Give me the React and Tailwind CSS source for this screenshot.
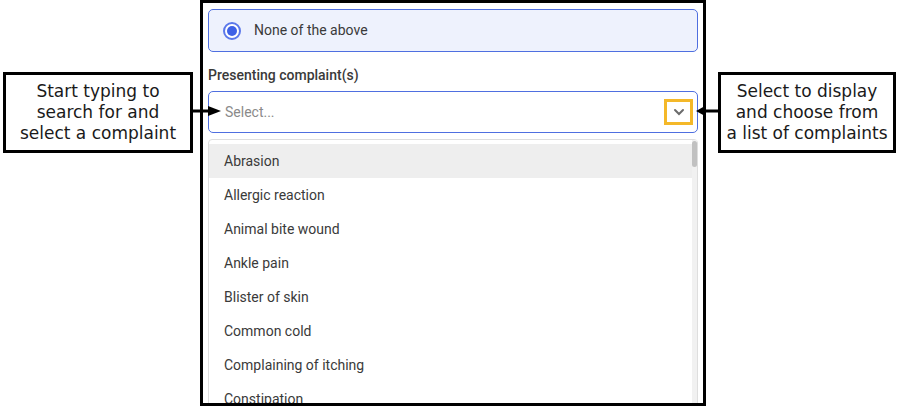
const complaints = [
  "Abrasion",
  "Allergic reaction",
  "Animal bite wound",
  "Ankle pain",
  "Blister of skin",
  "Common cold",
  "Complaining of itching",
  "Constipation",
];

const callout = { fontFamily: '"DejaVu Sans", "Liberation Sans", sans-serif' };
const ui = { fontFamily: 'Roboto, "Liberation Sans", sans-serif' };

function Callout({ className, children }) {
  return (
    <div
      className={`mt-[72px] h-[81px] border-[3px] border-black bg-white flex items-center justify-center text-center text-[17px] leading-[21px] text-[#1a1a1a] ${className}`}
      style={callout}
    >
      <p>{children}</p>
    </div>
  );
}

function Chevron() {
  return (
    <svg width="12" height="8" viewBox="0 0 12 8">
      <path d="M2 2l4 4 4-4" fill="none" stroke="#6b6b6b" strokeWidth="2" strokeLinecap="round" />
    </svg>
  );
}

export default function App() {
  return (
    <div className="relative w-[897px] h-[407px] bg-white flex items-start overflow-hidden">
      <Callout className="ml-[3px] w-[190px]">
        Start typing to
        <br />
        search for and
        <br />
        select a complaint
      </Callout>

      {/* form frame */}
      <div
        className="ml-[7px] w-[506px] h-[406px] border-[3px] border-black bg-white px-[5px] pt-[6px] overflow-hidden"
        style={ui}
      >
        <div className="h-[43px] rounded-[5px] border border-[#4f6fe0] bg-[#eef2fd] flex items-center pl-[14px]">
          <span className="w-[18px] h-[18px] rounded-full border-2 border-[#5b78ea] bg-white flex items-center justify-center">
            <span className="w-[10px] h-[10px] rounded-full bg-[#3f62e6]" />
          </span>
          <span className="ml-[13px] text-[14px] text-[#3a3a3a]">None of the above</span>
        </div>

        <div className="mt-[14px] leading-[18px] text-[14px] font-medium text-[#3a3a3a]">
          Presenting complaint(s)
        </div>

        <div className="mt-[7px] h-[42px] rounded-[5px] border border-[#4f6fe0] bg-white flex items-center pl-[16px] pr-[4px]">
          <span className="flex-1 text-[14px] text-[#8a8a8a]">Select...</span>
          <span className="w-[29px] h-[26px] border-[3px] border-[#f4b829] flex items-center justify-center">
            <Chevron />
          </span>
        </div>

        <div className="mt-[6px] rounded-[4px] border border-[#dedede] bg-white flex">
          <ul className="flex-1 pt-[4px] text-[14px] text-[#3a3a3a]">
            {complaints.map((c, i) => (
              <li
                key={c}
                className={`h-[34px] flex items-center pl-[15px] ${i === 0 ? "bg-[#eeeeee]" : ""}`}
              >
                {c}
              </li>
            ))}
          </ul>
          <div className="w-[5px] bg-[#f1f1f1] pt-[1px]">
            <div className="h-[26px] rounded-full bg-[#c1c1c1]" />
          </div>
        </div>
      </div>

      <Callout className="ml-[12px] w-[178px]">
        Select to display
        <br />
        and choose from
        <br />
        a list of complaints
      </Callout>

      {/* arrows */}
      <svg className="absolute left-[190px] top-[104px]" width="34" height="14" viewBox="0 0 34 14">
        <rect x="0" y="5.5" width="20" height="3" fill="#000" />
        <path d="M18 2l13 5-13 5z" fill="#000" />
      </svg>
      <svg className="absolute left-[694px] top-[104px]" width="26" height="14" viewBox="0 0 26 14">
        <rect x="8" y="5.5" width="18" height="3" fill="#000" />
        <path d="M2 7l9-5v10z" fill="#000" />
      </svg>
    </div>
  );
}
